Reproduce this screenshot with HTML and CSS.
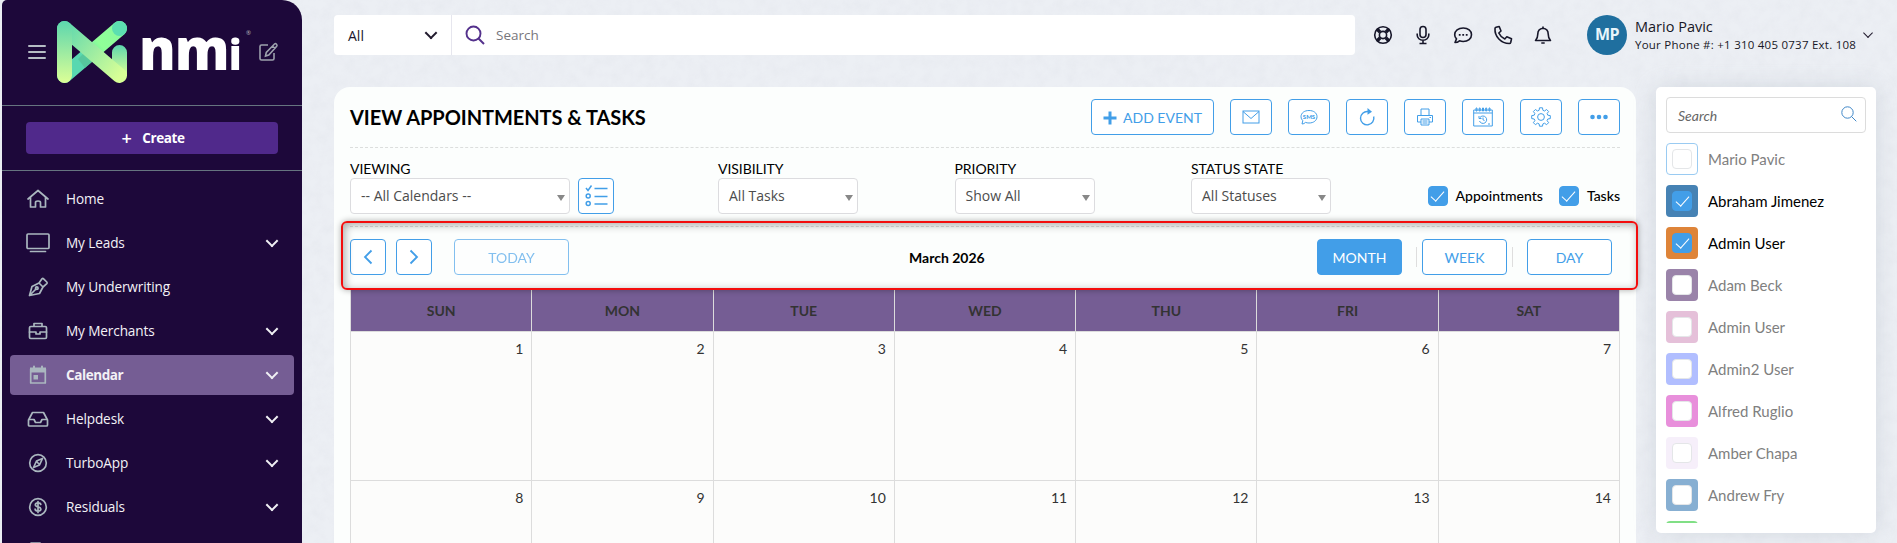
FILE: index.html
```html
<!DOCTYPE html>
<html lang="en">
<head>
<meta charset="utf-8">
<title>View Appointments &amp; Tasks</title>
<link rel="stylesheet" href="styles.css">
</head>
<body>
<svg class="texture" width="1897" height="543" aria-hidden="true">
  <filter id="stone"><feTurbulence type="fractalNoise" baseFrequency="0.09" numOctaves="4" seed="4"/><feColorMatrix values="0 0 0 0 .5  0 0 0 0 .53  0 0 0 0 .6  .5 0 0 0 -.17"/></filter>
  <rect width="1897" height="543" filter="url(#stone)" opacity=".3"/>
</svg>
<div class="app">
  <aside class="sidebar">
    <div class="brand">
      <svg class="burger" width="18" height="16" viewBox="0 0 18 16"><path d="M1 2h16M1 8h16M1 14h16"/></svg>
      <svg class="logo" width="70" height="62" viewBox="0 0 70 62">
        <defs>
          <linearGradient id="g1" x1="0" y1="0" x2="0" y2="1"><stop offset="0" stop-color="#5cd6ae"/><stop offset="1" stop-color="#dcff96"/></linearGradient>
          <linearGradient id="g2" gradientUnits="userSpaceOnUse" x1="7" y1="7" x2="63" y2="55"><stop offset="0" stop-color="#60d8ae"/><stop offset="1" stop-color="#d8ff96"/></linearGradient>
          <linearGradient id="g3" gradientUnits="userSpaceOnUse" x1="7" y1="54" x2="63" y2="7"><stop offset="0" stop-color="#58d8b0"/><stop offset=".35" stop-color="#58d8b0"/><stop offset=".65" stop-color="#90ff98"/><stop offset="1" stop-color="#8afa9c"/></linearGradient>
        </defs>
        <path d="M7.500 54.500L62.500 7.500" stroke="url(#g3)" stroke-width="15" stroke-linecap="round"/>
        <path d="M21 38l7 9 8-7-7-10z" fill="#55c095" opacity=".7"/>
        <circle cx="62.500" cy="7.500" r="7.500" fill="#5cdfb0"/>
        <path d="M55 31.500a7.500 7.500 0 0 1 15 0v23H55z" fill="url(#g1)"/>
        <path d="M7.500 7.500L62.500 54.500" stroke="url(#g2)" stroke-width="15" stroke-linecap="round"/>
        <rect width="15" height="62" rx="7.500" fill="url(#g1)"/>
      </svg>
      <span class="wordmark">nm<span class="short">i</span></span><span class="reg">®</span>
      <svg class="compose" width="21" height="20" viewBox="0 0 21 20"><path d="M10 3H3.500Q2 3 2 4.500v12Q2 18 3.500 18h11q1.500 0 1.500-1.500V11M7.500 14l.8-3.600L16.500 2q1-.8 2 .2t.2 2L10.800 13zM14.500 4l2.600 2.600"/></svg>
    </div>
    <div class="create-wrap"><button class="create"><span class="plus">+</span>Create</button></div>
    <nav>
      <a class="item"><svg viewBox="0 0 24 24"><path d="M2 12L12 3.500 22 12M4.500 10.500V20H9.500v-4.500q0-1.500 2.500-1.500t2.500 1.500V20h5v-9.500"/></svg><span>Home</span></a>
      <a class="item"><svg viewBox="0 0 24 24"><rect x="1" y="3" width="22" height="14.500" rx="1"/><path d="M4.500 20.500h15"/></svg><span>My Leads</span><i></i></a>
      <a class="item"><svg viewBox="0 0 24 24"><path d="M3.500 20.500L6 11.500l7-3.500 4 4-3.500 6.500zM3.500 20.500l6.500-6.500M13 8l3-4.200q.8-.8 1.600 0l3.200 3.200q.8.800 0 1.600L17 12"/><circle cx="10.800" cy="13.200" r="1.300"/></svg><span>My Underwriting</span></a>
      <a class="item"><svg viewBox="0 0 24 24"><rect x="3.500" y="7.500" width="17" height="12" rx="1.200"/><path d="M8 7V4.500h8V7M3.500 13H10v2h4v-2h6.500"/></svg><span>My Merchants</span><i></i></a>
      <a class="item active"><svg viewBox="0 0 24 24"><path d="M4.700 6h14.600v14H4.700z"/><path d="M4 4.500h16v5H4z" class="solid"/><path d="M8 3.500V6M16 3.500V6" stroke-width="2"/><path class="solid" d="M7.500 12h4.500v4.500H7.500z"/></svg><span>Calendar</span><i></i></a>
      <a class="item"><svg viewBox="0 0 24 24"><path d="M2.500 13L6.500 5.500h11l4 7.500v5q0 1-1 1h-17q-1 0-1-1zM3 12.500h5l1.500 3h5l1.500-3h5"/></svg><span>Helpdesk</span><i></i></a>
      <a class="item"><svg viewBox="0 0 24 24"><circle cx="12" cy="12" r="8.300"/><path d="M16.500 7.500l-3 6.500-6 2.500 3-6.500zM11 11l2 2"/></svg><span>TurboApp</span><i></i></a>
      <a class="item"><svg viewBox="0 0 24 24"><circle cx="12" cy="12" r="8.300"/><path d="M14.800 9.500q-.3-1.700-2.800-1.700t-2.700 2q0 1.500 2.700 2.100t2.900 2.200q-.2 2-2.900 2t-2.900-1.900M12 6.500v11"/></svg><span>Residuals</span><i></i></a>
      <a class="item"><svg viewBox="0 0 24 24"><path d="M5 4h9l5 5v12H5z"/></svg><span></span></a>
    </nav>
  </aside>

  <div class="content">
    <header class="topbar">
      <div class="search">
        <div class="scope">All<i class="chev"></i></div>
        <svg width="20" height="20" viewBox="0 0 20 20"><circle cx="8.500" cy="8.500" r="7"/><path d="M13.500 13.500L19 19"/></svg>
        <span class="ph">Search</span>
      </div>
      <div class="tools">
        <svg viewBox="0 0 20 20"><circle cx="10" cy="10" r="8.300"/><circle cx="10" cy="10" r="3.600"/><path d="M4 4l3.200 3.200M16 4l-3.200 3.200M4 16l3.200-3.200M16 16l-3.200-3.200" stroke-width="3.400"/></svg>
        <svg viewBox="0 0 20 20"><rect x="7" y="1.500" width="6" height="11" rx="3"/><path d="M4.200 8.500v1.500a5.800 5.300 0 0 0 11.600 0V8.500M10 15.300V18M6.500 18.500h7"/></svg>
        <svg viewBox="0 0 20 20"><path d="M2 17.500l1.500-3.600Q1.700 12 1.700 9.700C1.700 5.800 5.300 3 10.200 3s8.300 2.800 8.300 6.700-3.600 6.800-8.300 6.800q-2 0-3.700-.7Q4.500 17.500 2 17.500z"/><path d="M5.800 9.800h1.800M9.300 9.800h1.800M12.800 9.800h1.800" stroke-width="1.800"/></svg>
        <svg viewBox="0 0 20 20"><path d="M3 2.200L6.200 1.500 8 6 5.800 8q1.800 4 6 6l2-2.200 4.700 2-.8 3.700q-.3 1-1.400 1C8 18.500 1.500 11.500 2 3.500q0-1 1-1.300z"/></svg>
        <svg viewBox="0 0 20 20"><path d="M2.500 15.500q2.300-2.200 2.300-6.500 0-5.300 5.200-5.800 5.200.5 5.200 5.800 0 4.300 2.300 6.500zM10 3V1.500M8.300 18h3.400"/></svg>
      </div>
      <div class="user">
        <span class="avatar">MP</span>
        <span class="who"><b>Mario Pavic</b><small>Your Phone #: +1 310 405 0737 Ext. 108</small></span>
        <i class="chev small"></i>
      </div>
    </header>

    <div class="columns">
      <main class="card">
        <div class="titlebar">
          <h1>VIEW APPOINTMENTS &amp; TASKS</h1>
          <div class="actions">
            <button class="btn add"><svg width="14" height="14" viewBox="0 0 14 14"><path d="M7 .5v13M.5 7h13" stroke-width="3"/></svg>ADD EVENT</button>
            <button class="btn"><svg viewBox="0 0 20 20"><rect x="2" y="4" width="16" height="12"/><path d="M2 4.500l8 7 8-7"/></svg></button>
            <button class="btn"><svg viewBox="0 0 20 20"><path d="M3 17l.8-3.300Q2 12 2 9.800C2 6 5.300 3.500 10 3.500s8 2.500 8 6.200-3.300 6.300-8 6.300q-2 0-3.500-.6Q5 17 3 17z"/><text x="10" y="12" class="sms">SMS</text></svg></button>
            <button class="btn"><svg viewBox="0 0 20 20"><path d="M11 4.500a6.700 6.700 0 1 0 5.700 5" stroke-width="1.400"/><path d="M10.500 1l4.500 3.700-4.500 3z" fill="#429ee8" stroke="none"/></svg></button>
            <button class="btn"><svg viewBox="0 0 20 20"><path d="M6 8V2h8v6M6 15H2.500V8.500h15V15H14M6 12h8v6H6zM7.500 14h5M7.500 16h5M14.500 10.500h1.500"/></svg></button>
            <button class="btn"><svg viewBox="0 0 20 20"><path d="M.7 3h18.600v16H.7zM.7 6h18.600M3 1h1v3H3zM6.200 1h1v3h-1zM9.500 1h1v3h-1zM12.700 1h1v3h-1zM16 1h1v3h-1zM7 10.500a3.700 3.700 0 1 1-.5 3.500M6 9v2.500h2.500M10 10.500v2.300l1.500.7M15 17h2"/></svg></button>
            <button class="btn"><svg viewBox="0 0 20 20"><path d="M8.500.8h3l.4 2.500 1.600.7 2.100-1.500 2 2-1.500 2.100.7 1.600 2.500.4v3l-2.500.4-.7 1.600 1.500 2.100-2 2-2.100-1.500-1.600.7-.4 2.300h-3l-.4-2.300-1.600-.7-2.100 1.500-2-2 1.500-2.100-.7-1.600-2.500-.4v-3l2.500-.4.700-1.600L2.400 4.500l2-2L6.500 4l1.600-.7z"/><circle cx="10" cy="10" r="3.400"/></svg></button>
            <button class="btn"><svg viewBox="0 0 20 20"><path d="M3.500 10h.01M10 10h.01M16.500 10h.01" stroke-width="4.600" stroke-linecap="round"/></svg></button>
          </div>
        </div>

        <div class="filters">
          <div class="field viewing"><label>VIEWING</label><div class="pair"><div class="select">-- All Calendars --</div>
            <button class="btn sq"><svg width="24" height="24" viewBox="0 0 24 24" stroke-width="1.500"><path d="M2 4l2 2.500 3.500-5M10.500 4.500h13M10.500 12.500h13M10.500 20h13"/><circle cx="4.200" cy="12" r="2"/><circle cx="4.200" cy="19.500" r="2"/></svg></button></div></div>
          <div class="field"><label>VISIBILITY</label><div class="select">All Tasks</div></div>
          <div class="field"><label>PRIORITY</label><div class="select">Show All</div></div>
          <div class="field"><label>STATUS STATE</label><div class="select">All Statuses</div></div>
          <div class="checks">
            <span class="cb on"></span><span class="appt">Appointments</span>
            <span class="cb on"></span><span>Tasks</span>
          </div>
        </div>

        <div class="nav">
          <div class="highlight"></div>
          <button class="btn sq"><svg width="10" height="16" viewBox="0 0 10 16"><path d="M8.500 1.500L2 8l6.500 6.500" stroke-width="1.800"/></svg></button>
          <button class="btn sq next"><svg width="10" height="16" viewBox="0 0 10 16"><path d="M1.500 1.500L8 8l-6.500 6.500" stroke-width="1.800"/></svg></button>
          <button class="btn today">TODAY</button>
          <strong class="month">March 2026</strong>
          <button class="btn view sel">MONTH</button><span class="sep"></span>
          <button class="btn view week">WEEK</button><span class="sep two"></span>
          <button class="btn view day">DAY</button>
        </div>

        <div class="cal">
          <div class="th">SUN</div><div class="th">MON</div><div class="th">TUE</div><div class="th">WED</div><div class="th">THU</div><div class="th">FRI</div><div class="th">SAT</div>
          <div>1</div><div>2</div><div>3</div><div>4</div><div>5</div><div>6</div><div>7</div>
          <div>8</div><div>9</div><div>10</div><div>11</div><div>12</div><div>13</div><div>14</div>
        </div>
      </main>

      <aside class="people">
        <div class="psearch"><em>Search</em><svg width="16" height="16" viewBox="0 0 16 16"><circle cx="6.500" cy="6.500" r="5.700"/><path d="M10.500 10.500L15.300 15.300"/></svg></div>
        <div class="list">
          <div class="person"><span class="sw own"><span class="cb"></span></span>Mario Pavic</div>
          <div class="person picked"><span class="sw c1"><span class="cb on"></span></span>Abraham Jimenez</div>
          <div class="person picked"><span class="sw c2"><span class="cb on"></span></span>Admin User</div>
          <div class="person"><span class="sw c3"><span class="cb"></span></span>Adam Beck</div>
          <div class="person"><span class="sw c4"><span class="cb"></span></span>Admin User</div>
          <div class="person"><span class="sw c5"><span class="cb"></span></span>Admin2 User</div>
          <div class="person"><span class="sw c6"><span class="cb"></span></span>Alfred Ruglio</div>
          <div class="person"><span class="sw c7"><span class="cb"></span></span>Amber Chapa</div>
          <div class="person"><span class="sw c8"><span class="cb"></span></span>Andrew Fry</div>
          <div class="person"><span class="sw c9"></span></div>
        </div>
      </aside>
    </div>
  </div>
</div>
</body>
</html>
```
FILE: styles.css
```css
* { box-sizing: border-box; }
body { margin: 0; width: 1897px; height: 543px; overflow: hidden; background: #eceff4; font-family: Lato, sans-serif; color: #000; }
button { font: inherit; padding: 0; margin: 0; }
svg { fill: none; flex: none; display: block; }
.texture { position: absolute; z-index: -1; }
.app { display: flex; height: 543px; padding-left: 2px; overflow: hidden; }

.sidebar { width: 300px; flex: none; background: #1d083a; border-radius: 5px 20px 0 0; color: #f3f1f6; font-family: "Open Sans", sans-serif; overflow: hidden; }
.brand { height: 106px; border-bottom: 1px solid #667480; display: flex; align-items: flex-start; padding: 21px 0 0 26px; }
.burger { stroke: #b5bcc4; stroke-width: 2; margin: 23px 11px 0 0; stroke-linecap: round; }
.wordmark { font: 800 59px/62px "Open Sans", sans-serif; color: #fff; width: 107px; margin: -5px 0 0 12px; letter-spacing: -1px; transform: scaleX(.93); transform-origin: 0 0; white-space: nowrap; }
.short { font-size: 43px; line-height: 1; }
.reg { font-size: 6px; line-height: 8px; width: 5px; margin-top: 8px; color: #bbb; }
.compose { stroke: #9da1ad; stroke-width: 1.600; margin: 21px 0 0 7px; }
.create-wrap { height: 65px; padding: 16px 24px; border-bottom: 1px solid #667480; }
.create { width: 252px; height: 32px; border: 0; border-radius: 4px; background: #50298b; color: #fff; font: 700 13.500px/32px "Open Sans", sans-serif; display: flex; justify-content: center; align-items: center; gap: 11px; letter-spacing: -.4px; padding-left: 2px; }
.plus { font-size: 18px; font-weight: 600; }
nav { padding: 8px 8px 0; }
.item { height: 40px; margin-bottom: 4px; border-radius: 4px; display: flex; align-items: center; padding: 0 16px; font-size: 13.600px; font-weight: 500; letter-spacing: -.12px; }
.item svg { width: 24px; height: 24px; stroke: #aab7bf; stroke-width: 1.700; stroke-linejoin: round; margin-right: 16px; stroke-linecap: round; }
.item .solid { fill: #aab7bf; stroke: none; }
.item span { flex: 1; margin-top: -1px; }
.item i, .chev { width: 9px; height: 9px; border: solid #f0f0f4; border-width: 0 2px 2px 0; transform: translate(-1.500px, -2.500px) rotate(45deg); }
.active { background: #755d94; font-weight: 700; font-size: 13.500px; letter-spacing: -.4px; }
.active span { margin-top: 0; }

.content { padding: 15px 0 0 32px; flex: 1; }
.topbar { display: flex; height: 40px; margin-bottom: 32px; font-family: "Open Sans", sans-serif; }
.search { width: 1021px; background: #fff; border-radius: 4px; display: flex; align-items: center; font-size: 14px; color: #20162c; }
.scope { width: 118px; height: 40px; border-right: 1px solid #e6e6ee; display: flex; align-items: center; justify-content: space-between; padding: 0 14px 0 14px; margin-right: 13px; }
.chev { border-color: #211a2d; border-width: 0 1.600px 1.600px 0; }
.scope .chev { border-width: 0 2px 2px 0; }
.search svg { stroke: #54318c; stroke-width: 1.900; margin-right: 11px; }
.ph { color: #77767c; font-size: 13.500px; }
.tools { display: flex; align-items: center; gap: 20px; margin-left: 18px; }
.tools svg { width: 20px; height: 20px; stroke: #17172a; stroke-width: 1.600; stroke-linejoin: round; }
.user { display: flex; align-items: center; margin-left: 34px; color: #181726; }
.avatar { width: 40px; height: 40px; border-radius: 50%; background: #1f6f9f; color: #e8f5fb; font-weight: 700; font-size: 16px; line-height: 39px; text-align: center; margin-right: 8px; letter-spacing: -.5px; }
.who { width: 222px; white-space: nowrap; display: flex; flex-direction: column; margin-top: 0; }
.who b { font-weight: 400; font-size: 14.500px; line-height: 20px; }
.who small { font-size: 11.500px; line-height: 16px; letter-spacing: .24px; }
.small { width: 7px; height: 7px; border-width: 0 1px 1px 0; margin-left: 9px; }

.columns { display: flex; gap: 20px; align-items: flex-start; }
.card { width: 1302px; height: 470px; border-radius: 16px 16px 0 0; background: #fcfefd; padding: 0 16px; }
.titlebar { height: 61px; padding-top: 12px; border-bottom: 1px dashed #dcdedd; display: flex; justify-content: space-between; }
h1 { margin: 0; font-size: 20px; font-weight: 700; line-height: 37px; letter-spacing: -.05px; }
.actions { display: flex; gap: 16px; }
.btn { width: 42px; height: 36px; border: 1px solid #429ee8; border-radius: 4px; background: #fff; color: #429ee8; display: flex; align-items: center; justify-content: center; font-size: 14px; }
.btn svg { stroke: #429ee8; }
.btn svg:not([width]) { width: 20px; height: 20px; margin-top: -1px; }
.add { width: 123px; gap: 6px; padding-top: 1px; font-size: 14px; }
.sms { font: 900 6px Lato, sans-serif; fill: #429ee8; stroke: none; text-anchor: middle; }
.filters { height: 78px; display: flex; }
.field { width: 140px; margin-right: 96.500px; }
.viewing { width: 264px; margin-right: 104px; }
.pair { display: flex; gap: 8px; }
.field label { display: block; height: 30px; padding-top: 12px; line-height: 17px; font-size: 14px; letter-spacing: -.05px; }
.select { height: 36px; flex: 1; border: 1px solid #dcdcdf; border-radius: 4px; background: #fff; color: #4c4c4c; font: 14px/34px "Open Sans", sans-serif; padding: 0 4px 0 10px; display: flex; justify-content: space-between; align-items: center; white-space: nowrap; }
.select::after { content: ""; border: solid transparent; border-width: 6px 4px 0; border-top-color: #888; margin-top: 3px; }
.sq { width: 36px; }
.checks { margin-left: auto; padding-top: 38px; display: flex; font-size: 14px; line-height: 20px; font-weight: 500; gap: 8px; }
.appt { margin-right: 8px; }
.cb { width: 20px; height: 20px; border: 1px solid #e4e6e8; border-radius: 4px; background: #fff; display: flex; justify-content: center; flex: none; }
.cb.on { background: #429ee8; border-color: #429ee8; }
.cb.on::after { content: ""; width: 6px; height: 12px; border: solid #fff; border-width: 0 1px 1px 0; transform: translateY(1px) rotate(42deg); }

.nav { position: relative; height: 63px; border-top: 1px dashed #dcdedd; padding-top: 12px; display: flex; align-items: flex-start; }
.highlight { position: absolute; left: -9px; top: -6px; width: 1297px; height: 69px; border: 2.500px solid #f30d0d; border-radius: 6px; box-shadow: 0 0 6px #0005, inset 2px 2px 8px #0005; z-index: 2; pointer-events: none; }
.next { margin-left: 10px; }
.today { width: 115px; margin-left: 22px; opacity: .65; padding-top: 1px; }
.month { flex: 1; font-size: 14px; line-height: 37px; padding-left: 340px; }
.view { width: 85px; padding-top: 1px; }
.sel { background: #429ee8; color: #fff; }
.sep { width: 1px; height: 20px; background: #dedede; margin: 8px 5px 0 14px; }
.two { margin: 8px 14px 0 5px; }
.day { margin-right: 8px; }

.cal { display: grid; grid-template-columns: repeat(7, 1fr); grid-template-rows: 43px 149px 149px; border-left: 1px solid #dcdcdc; font-size: 14px; color: #333; }
.cal > div { border: solid #dcdcdc; border-width: 0 1px 1px 0; background: #fcfcfb; padding: 8px 8px; line-height: 18px; text-align: right; }
.cal .th { background: #755d94; text-align: center; font-weight: 700; font-size: 14px; padding: 13px 0; }

.people { width: 220px; height: 446px; background: #fff; border-radius: 5px; padding: 10px; box-shadow: 0 0 22px #a5adba55; }
.psearch { height: 36px; border: 1px solid #dcdcdc; border-radius: 4px; display: flex; align-items: center; justify-content: space-between; padding: 0 8px 0 11px; font-size: 14px; color: #666; margin-bottom: 10px; }
.psearch svg { stroke: #3f87c8; margin-top: -3px; }
.list { height: 380px; overflow: hidden; }
.person { height: 32px; margin-bottom: 10px; display: flex; align-items: center; gap: 10px; color: #808080; font-size: 15px; }
.picked { color: #000; }
.sw { width: 32px; height: 32px; border-radius: 4px; padding: 6px; flex: none; }
.own { border: 1px solid #9acbf2; padding: 5px; }
.c1 { background: #4682b4; }
.c2 { background: #de8439; }
.c3 { background: #9a83a9; }
.c4 { background: #e5c0d9; }
.c5 { background: #b1beff; }
.c6 { background: #e88fdb; }
.c7 { background: #f6effa; }
.c8 { background: #87afd2; }
.c9 { background: #80df85; }
```
